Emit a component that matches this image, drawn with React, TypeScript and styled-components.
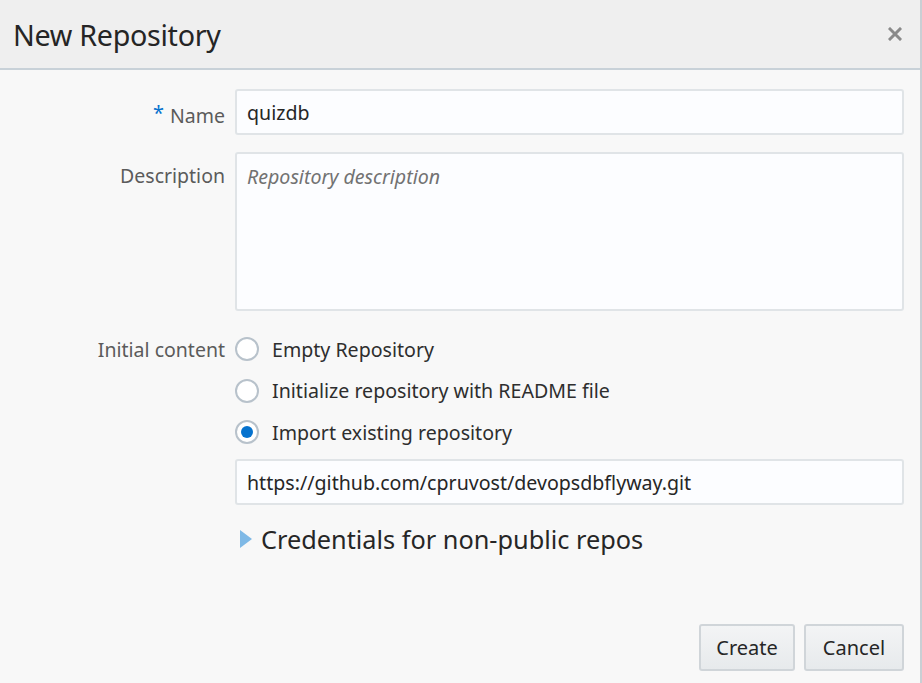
import React from 'react';
import styled, { createGlobalStyle } from 'styled-components';

const Global = createGlobalStyle`
  html, body {
    margin: 0;
    padding: 0;
    background: #f8f8f8;
  }
  body {
    font-family: "Noto Sans", "Open Sans", sans-serif;
  }
`

const Dialog = styled.div`
  width: 922px;
  height: 683px;
  box-sizing: border-box;
  border-right: 2px solid #c9cfd4;
  background: #f8f8f8;
  display: flex;
  flex-direction: column;
`

const Header = styled.div`
  height: 70px;
  flex: 0 0 auto;
  box-sizing: border-box;
  background: #efefef;
  border-bottom: 2px solid #c8d1d8;
  display: flex;
  align-items: center;
  justify-content: space-between;
  padding: 0 16px 0 13px;
`

const Title = styled.h1`
  margin: 0;
  font-size: 28.7px;
  font-weight: 400;
  color: #252525;
  letter-spacing: -0.3px;
`

const CloseButton = styled.button`
  border: none;
  background: none;
  padding: 0;
  width: 18px;
  height: 18px;
  display: flex;
  align-items: center;
  justify-content: center;
  cursor: pointer;
`

const Body = styled.div`
  flex: 1 1 auto;
  display: flex;
  flex-direction: column;
  padding: 19px 16px 12px 0;
`

const Form = styled.div`
  display: grid;
  grid-template-columns: 225px 1fr;
  column-gap: 10px;
  align-items: start;
`

const Label = styled.label<{ $top?: number }>`
  text-align: right;
  font-size: 19.5px;
  color: #5b5b5b;
  line-height: 26px;
  padding-top: ${p => p.$top ?? 0}px;
`

const Required = styled.span`
  color: #0572ce;
  font-size: 20px;
  margin-right: 6px;
  vertical-align: 3px;
`

const Field = styled.div<{ $gap?: number }>`
  margin-bottom: ${p => p.$gap ?? 0}px;
`

const TextInput = styled.input`
  width: 100%;
  height: 46px;
  box-sizing: border-box;
  border: 2px solid #e0e4e7;
  border-radius: 3px;
  background: #fcfdff;
  padding: 0 10px;
  font-family: inherit;
  font-size: 19.6px;
  color: #262626;
  outline: none;
  display: block;
`

const TextArea = styled.textarea`
  width: 100%;
  height: 159px;
  box-sizing: border-box;
  border: 2px solid #e0e4e7;
  border-radius: 3px;
  background: #fcfdff;
  padding: 9px 10px;
  font-family: inherit;
  font-size: 19.6px;
  color: #262626;
  resize: none;
  outline: none;
  display: block;

  &::placeholder {
    color: #727272;
    font-style: italic;
  }
`

const RadioGroup = styled.div`
  display: flex;
  flex-direction: column;
  gap: 17.5px;
`

const RadioRow = styled.label`
  display: flex;
  align-items: center;
  gap: 13px;
  font-size: 19.6px;
  color: #2e2e2e;
  height: 24px;
  cursor: pointer;
`

const RadioCircle = styled.span<{ $checked?: boolean }>`
  width: 24px;
  height: 24px;
  box-sizing: border-box;
  border-radius: 50%;
  border: 2px solid #b8c2cb;
  background: #ffffff;
  display: flex;
  align-items: center;
  justify-content: center;
  flex: 0 0 auto;

  &::after {
    content: "";
    width: 12px;
    height: 12px;
    border-radius: 50%;
    background: ${p => (p.$checked ? '#0572ce' : 'transparent')};
  }
`

const Disclosure = styled.div`
  display: flex;
  align-items: center;
  gap: 9px;
  padding-left: 5px;
  margin-top: 17px;
  font-size: 25.3px;
  color: #262626;
  cursor: pointer;
`

const Footer = styled.div`
  margin-top: auto;
  display: flex;
  justify-content: flex-end;
  gap: 9px;
`

const Button = styled.button<{ $width: number }>`
  width: ${p => p.$width}px;
  height: 47px;
  box-sizing: border-box;
  border: 2px solid #d0d5d9;
  border-radius: 3px;
  background: linear-gradient(#f3f4f5, #e7eaec);
  font-family: inherit;
  font-size: 20px;
  color: #262626;
  cursor: pointer;
`

export default function App() {
  return (
    <>
      <Global />
      <Dialog>
        <Header>
          <Title>New Repository</Title>
          <CloseButton aria-label="Close">
            <svg width="14" height="14" viewBox="0 0 14 14">
              <path d="M2 2 L12 12 M12 2 L2 12" stroke="#8a8a8a" strokeWidth="3" strokeLinecap="square" />
            </svg>
          </CloseButton>
        </Header>
        <Body>
          <Form>
            <Label $top={11}><Required>*</Required>Name</Label>
            <Field $gap={17}>
              <TextInput defaultValue="quizdb" />
            </Field>

            <Label $top={11}>Description</Label>
            <Field $gap={26}>
              <TextArea placeholder="Repository description" />
            </Field>

            <Label $top={0}>Initial content</Label>
            <Field $gap={15}>
              <RadioGroup>
                <RadioRow><RadioCircle />Empty Repository</RadioRow>
                <RadioRow><RadioCircle />Initialize repository with README file</RadioRow>
                <RadioRow><RadioCircle $checked />Import existing repository</RadioRow>
              </RadioGroup>
            </Field>

            <div />
            <Field>
              <TextInput defaultValue="https://github.com/cpruvost/devopsdbflyway.git" />
            </Field>

            <div />
            <Field>
              <Disclosure>
                <svg width="12" height="18" viewBox="0 0 12 18">
                  <path d="M0 0 L12 9 L0 18 Z" fill="#7fb9e6" />
                </svg>
                Credentials for non-public repos
              </Disclosure>
            </Field>
          </Form>
          <Footer>
            <Button $width={96}>Create</Button>
            <Button $width={100}>Cancel</Button>
          </Footer>
        </Body>
      </Dialog>
    </>
  );
}
